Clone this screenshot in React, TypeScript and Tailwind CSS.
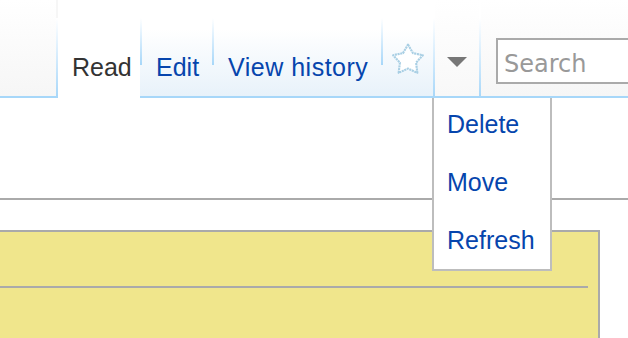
import React from 'react'

const font = { fontFamily: '"Liberation Sans", Arial, sans-serif' }

const Sep = ({ full }: { full?: boolean }) => (
  <div className={`w-[2px] shrink-0 ${full ? 'h-[98px] pt-[18px]' : 'h-[98px] pt-[18px] pb-[33px]'}`}>
    <div className="h-full w-full bg-gradient-to-b from-white to-[#a7d7f9]" />
  </div>
)

const Tab = ({ label, width, active }: { label: string; width: string; active?: boolean }) => (
  <div
    className={`${width} h-[98px] shrink-0 flex items-end pl-[14px] pb-[16px] text-[25px] leading-none ${
      active
        ? 'bg-white text-[#333] border-b-2 border-white'
        : 'bg-gradient-to-b from-white from-30% to-[#e8f2fa] text-[#0645ad] border-b-2 border-[#a7d7f9]'
    }`}
  >
    {label}
  </div>
)

const Star = () => (
  <svg width="34" height="32" viewBox="0 0 32 30">
    <polygon
      points="16,1.5 20.7,9.5 30,11.4 23.6,18.5 24.8,28 16,24 7.2,28 8.4,18.5 2,11.4 11.3,9.5"
      fill="white"
      stroke="#a9cfe4"
      strokeWidth="2"
      strokeLinejoin="round"
      strokeDasharray="2 0.6"
    />
  </svg>
)

export default function App() {
  return (
    <div className="w-[628px] h-[338px] overflow-hidden bg-white relative" style={font}>
      <div className="flex h-[98px]">
        <div className="w-[56px] shrink-0 bg-gradient-to-b from-white to-[#f6f6f6] border-b-2 border-[#a7d7f9]" />
        <div className="border-b-2 border-[#a7d7f9] bg-[#f6f6f6]">
          <Sep full />
        </div>
        <Tab label="Read" width="w-[82px]" active />
        <div className="bg-gradient-to-b from-white from-30% to-[#e8f2fa] border-b-2 border-[#a7d7f9]">
          <Sep />
        </div>
        <Tab label="Edit" width="w-[70px]" />
        <div className="bg-gradient-to-b from-white from-30% to-[#e8f2fa] border-b-2 border-[#a7d7f9]">
          <Sep />
        </div>
        <div className="w-[167px] h-[98px] shrink-0 flex items-end pl-[14px] pb-[16px] text-[25px] leading-none tracking-[0.5px] bg-gradient-to-b from-white from-30% to-[#e8f2fa] text-[#0645ad] border-b-2 border-[#a7d7f9]">
          View history
        </div>
        <div className="bg-gradient-to-b from-white from-30% to-[#e8f2fa] border-b-2 border-[#a7d7f9]">
          <Sep />
        </div>
        <div className="w-[50px] h-[98px] shrink-0 flex items-center justify-center pt-[22px] bg-gradient-to-b from-white from-30% to-[#e8f2fa] border-b-2 border-[#a7d7f9]">
          <Star />
        </div>
        <div className="border-b-2 border-[#a7d7f9]">
          <Sep full />
        </div>
        <div className="relative w-[44px] h-[98px] shrink-0 flex justify-center pt-[57px] bg-gradient-to-b from-white to-[#f8f8f8] border-b-2 border-[#a7d7f9]">
          <svg width="20" height="10" viewBox="0 0 20 10">
            <polygon points="0,0 20,0 10,10" fill="#777" />
          </svg>
          <div className="absolute left-[-3px] top-[98px] z-10 w-[120px] h-[173px] bg-white border-2 border-t-0 border-[#bdbdbd] flex flex-col gap-[33px] pt-[14px] pl-[13px] text-[25px] leading-[25px] text-[#0645ad]">
            <span>Delete</span>
            <span>Move</span>
            <span>Refresh</span>
          </div>
        </div>
        <div className="border-b-2 border-[#a7d7f9]">
          <Sep full />
        </div>
        <div className="flex-1 h-[98px] pl-[15px] pt-[38px] bg-gradient-to-b from-white to-[#f6f6f6] border-b-2 border-[#a7d7f9]">
          <div className="w-[200px] h-[46px] bg-white border-2 border-[#aaa] pl-[6px] pt-[12px]">
            <span
              className="text-[24px] leading-none text-[#999]"
              style={{ fontFamily: '"DejaVu Sans", Verdana, sans-serif' }}
            >
              Search
            </span>
          </div>
        </div>
      </div>
      <div className="h-[100px]" />
      <div className="h-[2px] bg-[#aaa]" />
      <div className="h-[30px]" />
      <div className="w-[600px] h-[120px] bg-[#f0e68c] border-t-2 border-r-2 border-[#aaa] pt-[54px]">
        <div className="w-[588px] h-[2px] bg-[#aaa]" />
      </div>
    </div>
  )
}
